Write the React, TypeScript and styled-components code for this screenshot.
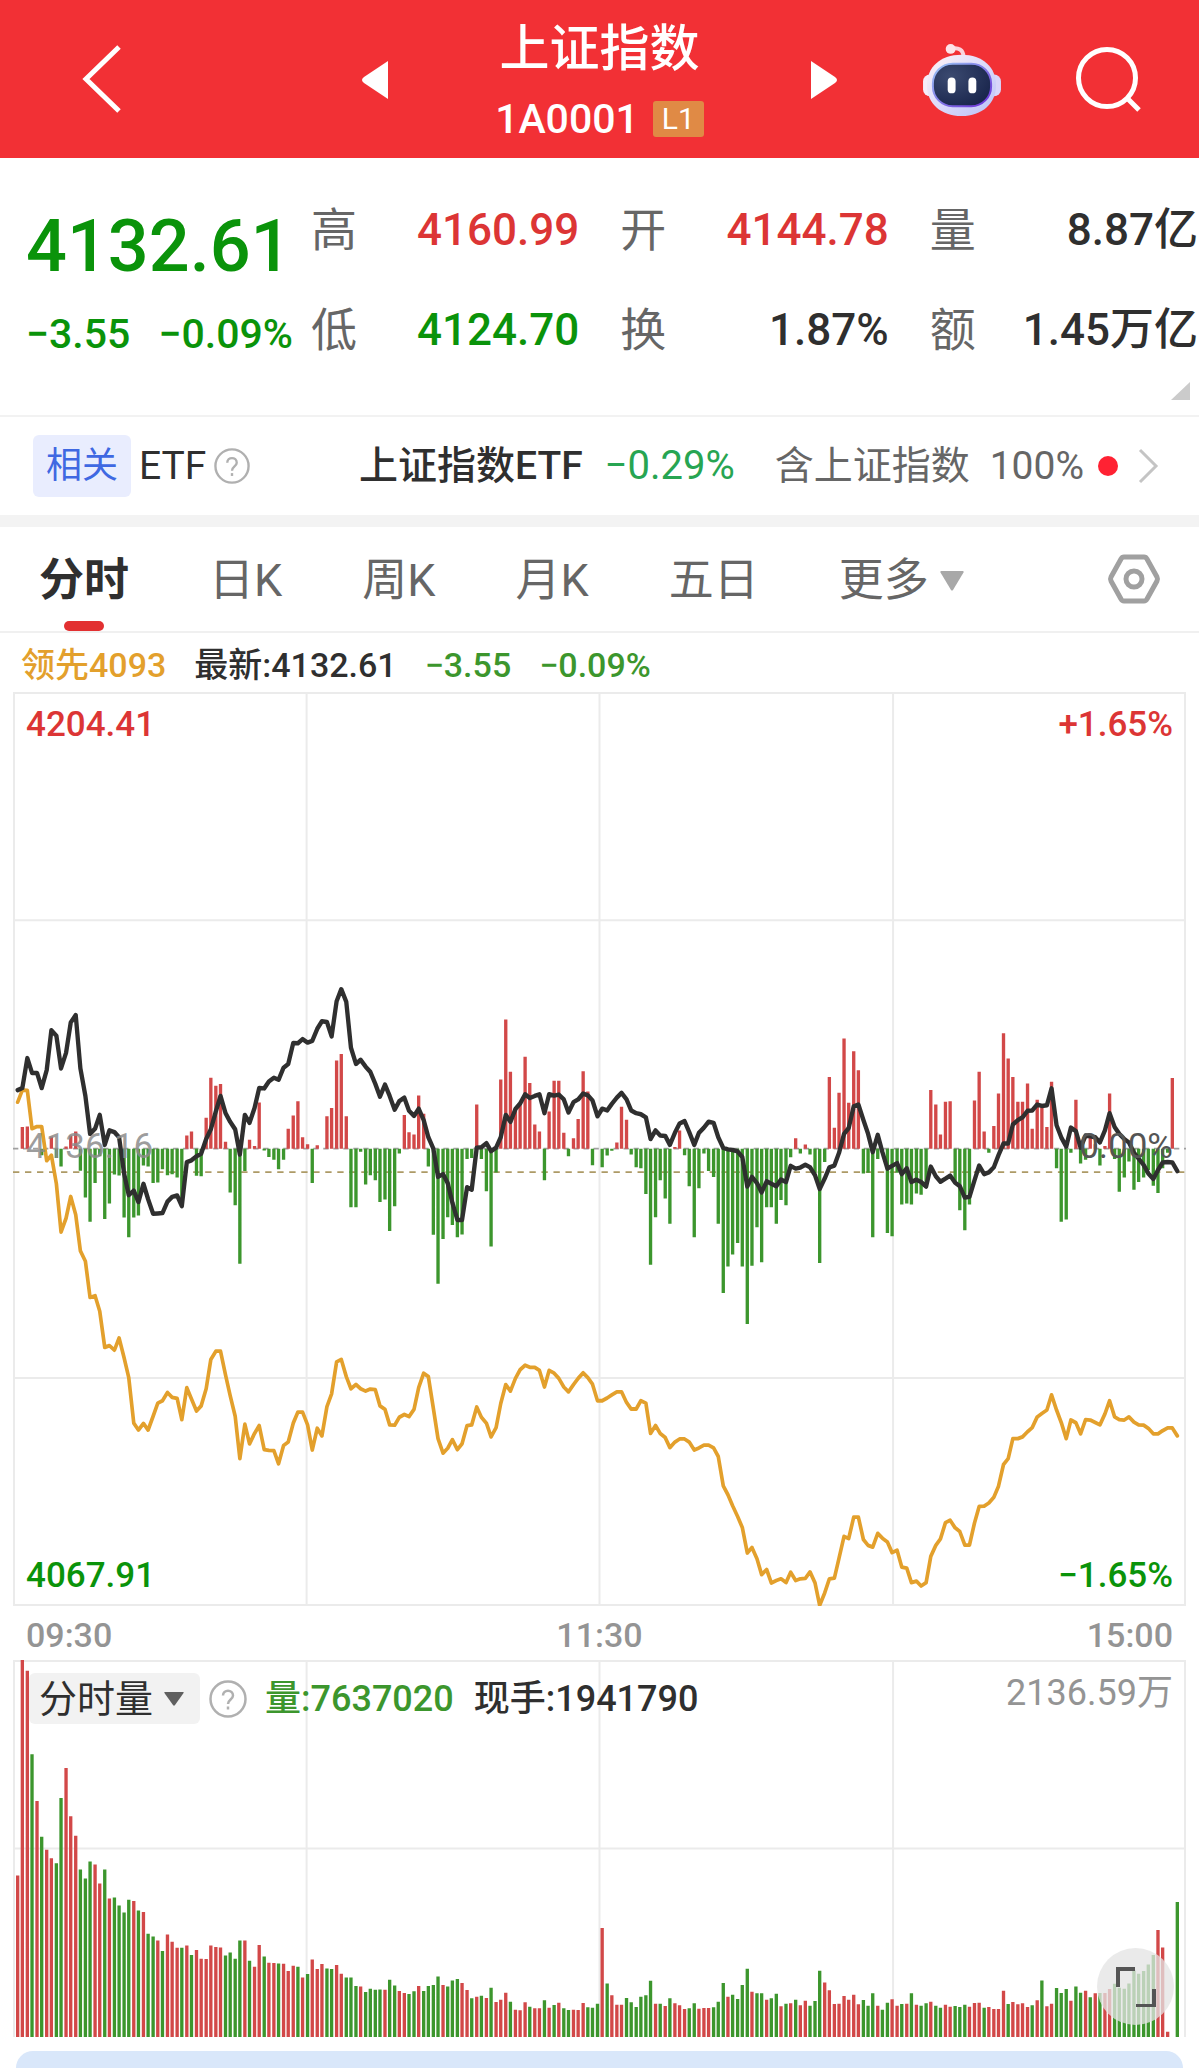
import React, { useState } from 'react';
import styled, { createGlobalStyle } from 'styled-components';

const color = {
  brand: '#f23035',
  rise: '#dc3535',
  fall: '#0a930a',
  chartRise: '#d24848',
  chartFall: '#3c962d',
  ink: '#2f2f2f',
  muted: '#666666',
  faint: '#949494',
  lead: '#e3a02c',
  grid: '#ebebeb',
};

/* One value per trading minute, in chart units measured downwards. */
const ZERO_LEVEL = 578;
const LAST_LEVEL = 646;

const priceLevels = [
  408, 402, 315, 358, 358, 402, 350, 234, 250, 345, 300, 212, 190, 345, 425, 535, 520, 480, 567, 525,
  530, 545, 650, 713, 700, 733, 680, 725, 767, 766, 765, 732, 718, 714, 745, 617, 612, 600, 593, 550,
  522, 470, 425, 475, 500, 522, 595, 480, 503, 460, 402, 403, 383, 372, 378, 343, 332, 271, 272, 260,
  270, 265, 230, 208, 210, 252, 150, 115, 152, 285, 332, 320, 340, 355, 390, 427, 392, 425, 465, 440,
  430, 468, 483, 462, 495, 545, 578, 660, 652, 678, 735, 785, 785, 690, 697, 575, 574, 562, 585, 575,
  545, 480, 500, 463, 447, 420, 431, 425, 420, 475, 420, 424, 421, 435, 473, 443, 435, 418, 423, 438,
  484, 462, 467, 448, 430, 416, 435, 467, 475, 478, 487, 550, 525, 540, 541, 567, 532, 505, 498, 530,
  567, 532, 517, 500, 503, 545, 576, 580, 582, 586, 602, 688, 660, 678, 705, 673, 680, 687, 668, 675,
  628, 636, 633, 625, 632, 655, 695, 665, 632, 627, 590, 535, 518, 455, 450, 495, 535, 588, 538, 588,
  636, 628, 620, 652, 635, 675, 668, 675, 688, 630, 658, 674, 665, 656, 677, 687, 720, 718, 670, 627,
  652, 647, 632, 597, 563, 563, 508, 495, 487, 468, 467, 450, 454, 452, 403, 510, 545, 572, 517, 527,
  575, 540, 542, 545, 560, 525, 475, 515, 535, 550, 560, 590, 607, 625, 650, 666, 640, 618, 617, 618,
  643,
];

const leadLevels = [
  443, 408, 409, 520, 514, 514, 613, 597, 680, 820, 780, 717, 770, 875, 905, 1010, 1005, 1050, 1155, 1150,
  1163, 1128, 1185, 1243, 1375, 1395, 1376, 1395, 1355, 1317, 1310, 1286, 1300, 1303, 1365, 1272, 1305, 1340, 1325, 1275,
  1190, 1166, 1166, 1235, 1295, 1355, 1478, 1378, 1435, 1405, 1382, 1452, 1454, 1455, 1493, 1440, 1430, 1375, 1343, 1343,
  1380, 1453, 1390, 1412, 1327, 1290, 1197, 1190, 1240, 1275, 1263, 1275, 1282, 1276, 1278, 1325, 1335, 1380, 1381, 1358,
  1350, 1356, 1335, 1272, 1230, 1240, 1332, 1420, 1462, 1448, 1423, 1452, 1435, 1382, 1380, 1328, 1358, 1375, 1415, 1388,
  1318, 1263, 1282, 1245, 1220, 1207, 1213, 1213, 1222, 1270, 1222, 1230, 1245, 1270, 1284, 1263, 1245, 1229, 1243, 1262,
  1310, 1310, 1302, 1293, 1284, 1284, 1315, 1334, 1334, 1310, 1317, 1405, 1382, 1405, 1417, 1446, 1430, 1421, 1421, 1430,
  1453, 1447, 1439, 1439, 1447, 1472, 1557, 1583, 1615, 1646, 1678, 1752, 1736, 1769, 1815, 1800, 1839, 1832, 1827, 1838,
  1808, 1832, 1827, 1826, 1807, 1839, 1904, 1868, 1827, 1825, 1767, 1704, 1710, 1648, 1648, 1713, 1730, 1735, 1695, 1709,
  1720, 1751, 1744, 1793, 1796, 1838, 1834, 1848, 1838, 1762, 1730, 1711, 1664, 1657, 1679, 1690, 1729, 1729, 1665, 1617,
  1616, 1607, 1590, 1558, 1495, 1478, 1420, 1420, 1415, 1400, 1388, 1357, 1347, 1337, 1293, 1337, 1373, 1420, 1366, 1374,
  1406, 1365, 1366, 1373, 1380, 1348, 1310, 1357, 1365, 1366, 1357, 1372, 1380, 1381, 1390, 1406, 1406, 1397, 1389, 1389,
  1412,
];

/* Bars grow from the zero level: above it they rise, below it they fall. */
const momentumLevels = [
  578, 515, 514, 578, 578, 597, 578, 543, 605, 630, 572, 540, 528, 642, 720, 790, 678, 600, 782, 737,
  653, 656, 778, 835, 778, 772, 627, 630, 678, 676, 638, 655, 652, 662, 735, 540, 528, 657, 658, 488,
  372, 395, 390, 558, 705, 742, 912, 643, 552, 570, 444, 583, 602, 610, 638, 610, 520, 482, 440, 545,
  565, 678, 568, 578, 484, 460, 322, 303, 484, 748, 748, 587, 682, 655, 670, 733, 726, 817, 745, 592,
  480, 530, 537, 424, 477, 630, 828, 970, 840, 777, 800, 835, 827, 608, 605, 450, 608, 702, 862, 647,
  377, 203, 355, 460, 450, 311, 387, 508, 528, 670, 470, 381, 381, 532, 600, 548, 492, 353, 412, 626,
  578, 632, 598, 584, 560, 456, 494, 595, 632, 635, 710, 915, 777, 670, 723, 796, 573, 525, 597, 687,
  835, 693, 592, 643, 660, 796, 997, 920, 885, 852, 920, 1087, 918, 806, 908, 748, 748, 796, 727, 742,
  603, 548, 592, 566, 595, 650, 910, 617, 370, 517, 416, 258, 445, 295, 350, 650, 648, 835, 608, 590,
  823, 832, 648, 740, 737, 740, 708, 712, 690, 408, 450, 537, 442, 440, 677, 757, 815, 740, 438, 355,
  528, 590, 512, 418, 243, 316, 370, 442, 442, 389, 520, 436, 448, 515, 384, 635, 790, 784, 590, 436,
  621, 610, 545, 565, 627, 570, 418, 608, 703, 662, 615, 697, 675, 662, 640, 686, 707, 635, 590, 373,
  578,
];

/* Bar tops in the volume pane; a negative entry marks a falling minute. */
const VOLUME_BASE = 1432;
const volumeLevels = [
  947, 298, 332, -583, 723, -831, 870, 895, -910, -714, 624, 769, 828, -929, -956, -905, 914, 971, -929, 1016,
  -1013, -1037, -1058, -1020, 1024, -1052, 1057, -1122, -1130, 1142, -1174, 1124, 1146, 1164, -1164, 1157, -1186, 1171, 1197, 1198,
  1157, 1162, 1163, -1187, -1178, -1197, -1142, 1142, -1203, 1221, 1156, -1190, 1209, 1210, -1211, 1212, 1234, 1218, -1221, 1253,
  -1243, 1199, 1228, 1213, -1226, -1228, 1216, 1242, -1253, -1253, -1279, 1280, -1297, -1287, -1290, -1289, 1290, -1260, -1277, 1294,
  1300, -1303, -1295, 1279, -1294, -1279, -1276, -1250, 1276, -1280, -1262, -1258, 1270, 1291, -1316, 1311, -1308, 1315, -1284, 1327,
  1320, 1299, -1326, 1350, 1352, 1328, -1341, 1346, 1346, -1322, 1344, -1336, 1329, -1346, -1351, 1350, 1351, 1330, -1343, -1344,
  -1332, 1105, -1271, 1307, 1335, 1335, -1315, -1328, -1342, -1311, -1307, -1263, 1332, -1332, 1339, -1316, 1331, 1337, 1348, -1346,
  -1331, 1347, 1345, 1345, -1343, -1326, -1270, 1311, -1305, -1318, -1276, -1227, 1296, -1301, -1301, 1320, -1316, -1302, 1340, -1332,
  1331, -1320, 1337, 1323, -1338, -1324, -1233, 1268, 1292, 1333, 1332, 1309, 1320, 1305, 1334, -1321, -1338, -1301, 1338, -1350,
  -1329, 1319, 1338, -1333, 1332, -1301, 1335, -1338, -1331, 1326, -1338, -1344, 1335, 1341, -1339, -1342, -1335, 1341, 1330, 1329,
  -1344, 1342, 1348, 1348, 1293, -1333, 1327, 1334, 1331, 1342, -1337, 1322, -1262, 1340, 1332, -1285, -1300, -1288, 1323, -1280,
  -1299, 1293, -1313, 1301, -1300, 1300, 1288, -1272, -1284, -1287, -1271, -1232, -1242, -1234, -1214, -1186, 1111, 1163, 1416, 1432,
  -1027,
];

const CHART_WIDTH = 3516;
const minuteX = (minute: number) => Math.round(14 + minute * 14.483);
const linePath = (levels: number[]) => levels.map((y, i) => `${i ? 'L' : 'M'}${minuteX(i)} ${y}`).join('');
const barPath = (levels: number[], base: number, keep: (level: number) => boolean) =>
  levels.map((y, i) => (keep(y) ? `M${minuteX(i)} ${base}V${Math.abs(y)}` : '')).join('');

const GlobalStyle = createGlobalStyle`
  *, *::before, *::after { box-sizing: border-box; }
  body {
    margin: 0;
    background: #fff;
    color: ${color.ink};
    font-family: Roboto, 'Noto Sans CJK SC', sans-serif;
  }
  button, select { font: inherit; color: inherit; border: 0; background: none; padding: 0; margin: 0; }
  a { color: inherit; text-decoration: none; }
  svg { display: block; }
  h1, p, dl, dd, dt { margin: 0; font-weight: inherit; }
`;

const Page = styled.div`
  display: flex;
  flex-direction: column;
  overflow: hidden;
`;

/* ---------- header ---------- */

const Header = styled.header`
  display: grid;
  grid-template-columns: 1fr 476px 1fr;
  align-items: center;
  height: 158px;
  padding-top: 2px;
  background: ${color.brand};
  color: #fff;
`;

const HeaderSide = styled.div<{ $end?: boolean }>`
  display: flex;
  align-items: center;
  gap: 75px;
  justify-content: ${p => (p.$end ? 'flex-end' : 'flex-start')};
  padding: ${p => (p.$end ? '0 57px 0 0' : '0 0 0 82px')};
`;

const Switcher = styled.div`
  display: flex;
  align-items: center;
  justify-content: space-between;
`;

const TitleBlock = styled.div`
  display: flex;
  flex-direction: column;
  align-items: center;
  gap: 14px;
`;

const Title = styled.h1`
  font-size: 50px;
  line-height: 64px;
  font-weight: 500;
`;

const CodeLine = styled.p`
  display: flex;
  align-items: center;
  gap: 14px;
  font-size: 41px;
  line-height: 48px;
  font-weight: 500;
`;

const LevelBadge = styled.span`
  padding: 0 9px;
  border-radius: 3px;
  background: #e08a45;
  font-size: 30px;
  line-height: 36px;
  font-weight: 400;
`;

/* ---------- quote ---------- */

const Quote = styled.section`
  display: flex;
  height: 259px;
  border-bottom: 2px solid #f2f2f2;
  padding: 36px 1px 0 26px;
  position: relative;
`;

const QuoteMain = styled.div`
  width: 285px;
  flex: none;
  white-space: nowrap;
  color: ${color.fall};
`;

const LastPrice = styled.p`
  padding-top: 11px;
  font-size: 72px;
  line-height: 84px;
  font-weight: 500;
`;

const Change = styled.p`
  display: flex;
  gap: 28px;
  padding-top: 21px;
  font-size: 41px;
  line-height: 48px;
  font-weight: 500;
`;

const Stats = styled.dl`
  flex: 1;
  display: grid;
  grid-template-columns: repeat(3, 1fr);
  grid-auto-rows: 72px;
  column-gap: 41px;
  row-gap: 28px;
`;

const Stat = styled.div`
  display: flex;
  align-items: center;
  justify-content: space-between;
  white-space: nowrap;
`;

const StatLabel = styled.dt`
  font-size: 46px;
  line-height: 60px;
  color: ${color.muted};
`;

const StatValue = styled.dd<{ $tone?: 'rise' | 'fall' }>`
  font-size: 44px;
  line-height: 60px;
  font-weight: 500;
  color: ${p => (p.$tone ? color[p.$tone] : color.ink)};
`;

const Corner = styled.span`
  position: absolute;
  right: 9px;
  bottom: 15px;
  width: 19px;
  height: 18px;
  background: #cbcbcb;
  clip-path: polygon(100% 0, 100% 100%, 0 100%);
`;

/* ---------- related fund ---------- */

const Related = styled.section`
  display: flex;
  align-items: center;
  justify-content: space-between;
  height: 110px;
  padding: 0 40px 0 33px;
  border-bottom: 12px solid #f3f3f3;
  font-size: 39px;
  line-height: 48px;
  white-space: nowrap;
`;

const RelatedGroup = styled.div`
  display: flex;
  align-items: center;
  gap: 8px;
`;

const RelatedTag = styled.span`
  padding: 0 13px;
  border-radius: 6px;
  background: #e9edfe;
  color: #3f68e2;
  font-size: 36px;
  line-height: 62px;
`;

const FundLink = styled.a`
  display: flex;
  align-items: center;
`;

const FundName = styled.span`
  font-weight: 500;
`;

const FundChange = styled.span`
  margin: 0 40px 0 22px;
  font-size: 40px;
  color: #27a552;
`;

const FundShare = styled.span`
  margin-right: 14px;
  color: ${color.muted};
`;

const Dot = styled.i`
  width: 20px;
  height: 20px;
  margin-right: 20px;
  border-radius: 50%;
  background: #ff2233;
`;

/* ---------- period tabs ---------- */

const PeriodBar = styled.nav`
  display: flex;
  align-items: center;
  justify-content: space-between;
  height: 106px;
  padding: 0 38px 0 39px;
  border-bottom: 2px solid #f0f0f0;
`;

const Periods = styled.div`
  display: flex;
  align-items: center;
  gap: 80px;
  height: 100%;
`;

const Period = styled.button<{ $active: boolean }>`
  position: relative;
  height: 100%;
  padding-top: 4px;
  font-size: 45px;
  line-height: 60px;
  font-weight: ${p => (p.$active ? 700 : 400)};
  color: ${p => (p.$active ? color.ink : color.muted)};

  &::after {
    content: '';
    display: ${p => (p.$active ? 'block' : 'none')};
    position: absolute;
    left: 50%;
    bottom: 0;
    width: 40px;
    height: 10px;
    margin-left: -20px;
    border-radius: 5px;
    background: #e23031;
  }
`;

const SelectWrap = styled.label<{ $boxed?: boolean }>`
  display: flex;
  align-items: center;
  gap: 10px;
  height: ${p => (p.$boxed ? '51px' : '100%')};
  padding: ${p => (p.$boxed ? '0 16px 0 10px' : '4px 0 0')};
  border-radius: 6px;
  background: ${p => (p.$boxed ? '#f2f2f2' : 'transparent')};
  color: ${p => (p.$boxed ? color.ink : color.muted)};
  font-size: ${p => (p.$boxed ? '38px' : '45px')};
  line-height: ${p => (p.$boxed ? '50px' : '60px')};
  font-weight: 400;
`;

const PlainSelect = styled.select`
  appearance: none;
  outline: none;
`;

/* ---------- charts ---------- */

const ChartArea = styled.main`
  padding: 0 13px;
`;

const Legend = styled.p`
  display: flex;
  align-items: center;
  gap: 28px;
  height: 59px;
  padding: 5px 0 0 8px;
  font-size: 34px;
  line-height: 48px;
  font-weight: 500;
`;

const Tone = styled.span<{ $color: string }>`
  color: ${p => p.$color};
`;

const Pane = styled.div<{ $height: number }>`
  position: relative;
  height: ${p => p.$height}px;

  > svg { width: 100%; height: 100%; }
`;

const ScaleLabel = styled.span<{ $side: 'left' | 'right'; $at: 'top' | 'middle' | 'bottom'; $color: string }>`
  position: absolute;
  ${p => p.$side}: 13px;
  ${p => (p.$at === 'bottom' ? 'bottom: 8px;' : p.$at === 'middle' ? 'top: calc(50% - 24px);' : 'top: 11px;')}
  font-size: 35px;
  line-height: 44px;
  font-weight: ${p => (p.$at === 'middle' ? 400 : 500)};
  color: ${p => p.$color};
`;

const TimeAxis = styled.div`
  display: grid;
  grid-template-columns: 1fr auto 1fr;
  align-items: center;
  height: 54px;
  padding: 3px 13px 0;
  font-size: 34px;
  line-height: 44px;
  font-weight: 500;
  color: ${color.faint};

  > :last-child { text-align: right; }
`;

const VolumeHead = styled.div`
  position: absolute;
  inset: 13px 13px auto 16px;
  display: flex;
  align-items: center;
  gap: 9px;
  font-size: 36px;
  line-height: 50px;
  font-weight: 500;
  white-space: nowrap;
`;

const VolumeFigures = styled.span`
  display: flex;
  gap: 20px;
  padding-left: 9px;
`;

const VolumePeak = styled.span`
  margin: -12px 0 0 auto;
  font-weight: 400;
  color: ${color.faint};
`;

const ExpandButton = styled.button`
  position: absolute;
  right: 12px;
  bottom: 12px;
  display: grid;
  place-items: center;
  width: 77px;
  height: 77px;
  border-radius: 50%;
  background: rgba(228, 228, 228, 0.76);
`;

const Banner = styled.aside`
  height: 17px;
  margin: 14px 16px 0;
  border-radius: 18px 18px 0 0;
  background: #d9e7fa;
`;

const IconButton = styled.button`
  display: flex;
  cursor: pointer;
`;

const BackIcon = () => (
  <svg width="40" height="70" viewBox="0 0 40 70" fill="none" stroke="#fff" strokeWidth="5">
    <path d="M37 2 4 34l33 32" />
  </svg>
);

const TriangleIcon = ({ right }: { right?: boolean }) => (
  <svg width="26" height="38" viewBox="0 0 26 38" fill="#fff">
    <path d={right ? 'M0 0v38l24-16q4-3 0-6Z' : 'M26 0v38L2 22q-4-3 0-6Z'} />
  </svg>
);

const RobotIcon = () => (
  <svg width="78" height="73" viewBox="0 0 79 74">
    <defs>
      <linearGradient id="shell" x1="0" y1="0" x2="1" y2="1">
        <stop offset="0" stopColor="#fff4f6" />
        <stop offset="0.55" stopColor="#d9d8fb" />
        <stop offset="1" stopColor="#b9c0f5" />
      </linearGradient>
      <linearGradient id="rim" x1="0" y1="0" x2="1" y2="1">
        <stop offset="0" stopColor="#9cc9f7" />
        <stop offset="1" stopColor="#6a2bd6" />
      </linearGradient>
      <radialGradient id="face" cx="0.3" cy="0.3" r="0.8">
        <stop offset="0" stopColor="#3b4a70" />
        <stop offset="1" stopColor="#19254c" />
      </radialGradient>
    </defs>
    <path d="M28 5c8-2 13 1 13 8" fill="none" stroke="#fbd3dc" strokeWidth="4" />
    <circle cx="28" cy="5" r="5" fill="#fde3e8" />
    <rect x="0" y="31" width="14" height="22" rx="7" fill="#f6ecfa" />
    <rect x="65" y="31" width="14" height="22" rx="7" fill="#d9d5fa" />
    <path d="M39 11c22 0 35 13 35 31S60 73 39 73 4 60 4 42s13-31 35-31Z" fill="url(#shell)" />
    <rect x="10" y="20" width="59" height="43" rx="20" fill="url(#face)" stroke="url(#rim)" strokeWidth="2" />
    <rect x="25" y="34" width="8" height="16" rx="4" fill="#fff" />
    <rect x="46" y="34" width="8" height="16" rx="4" fill="#fff" />
  </svg>
);

const SearchIcon = () => (
  <svg width="66" height="66" viewBox="0 0 66 66" fill="none" stroke="#fff" strokeWidth="5">
    <circle cx="31" cy="31" r="28.5" />
    <path d="m52 52 11 11" />
  </svg>
);

const HelpIcon = ({ size }: { size: number }) => (
  <svg width={size} height={size} viewBox="0 0 38 38" fill="none" stroke="#b0b0b0" strokeWidth="2.5">
    <circle cx="19" cy="19" r="17.5" />
    <path d="M14 15.500c0-6.500 10-6.500 10 0 0 4-5 4-5 8.500" />
    <path d="M19 26.500v3" />
  </svg>
);

const ChevronIcon = () => (
  <svg width="21" height="36" viewBox="0 0 21 36" fill="none" stroke="#c4c4c4" strokeWidth="3">
    <path d="m2 2 16 16L2 34" />
  </svg>
);

const CaretIcon = ({ width, height, fill }: { width: number; height: number; fill: string }) => (
  <svg width={width} height={height} viewBox="0 0 24 20" fill={fill} preserveAspectRatio="none">
    <path d="M1 0h22q1 0 .5 1.500L13 19q-1 1-2 0L.5 1.500Q0 0 1 0Z" />
  </svg>
);

const SettingsIcon = () => (
  <svg width="54" height="50" viewBox="0 0 54 50" fill="none" stroke="#a0a0a0" strokeWidth="5" strokeLinejoin="round">
    <path d="M17 3h20q2 0 3 2l10 18q1 2 0 4L40 45q-1 2-3 2H17q-2 0-3-2L4 27q-1-2 0-4L14 5q1-2 3-2Z" />
    <circle cx="27" cy="25" r="8" />
  </svg>
);

const ExpandIcon = () => (
  <svg width="40" height="40" viewBox="0 0 40 40" fill="none" stroke="#555" strokeWidth="4">
    <path d="M2 20V2h17M38 22v17H20" />
  </svg>
);

const PriceChart = () => (
  <svg viewBox={`0 -748 ${CHART_WIDTH} 2654`} preserveAspectRatio="none" fill="none" role="img" aria-label="分时走势">
    <g stroke={color.grid} strokeWidth="6">
      <path d="M3-745H3513V1903H3Z" />
      <path d="M0-85H3516M0 1244H3516M880-748V1906M1758-748V1906M2638-748V1906" />
    </g>
    <path d={`M0 ${ZERO_LEVEL}H3516`} stroke="#a0a0a0" strokeWidth="5" strokeDasharray="16 14" />
    <path d={`M0 ${LAST_LEVEL}H3516`} stroke="#ad9a66" strokeWidth="5" strokeDasharray="19 17" />
    <g strokeWidth="10">
      <path d={barPath(momentumLevels, ZERO_LEVEL, y => y < ZERO_LEVEL)} stroke={color.chartRise} />
      <path d={barPath(momentumLevels, ZERO_LEVEL, y => y > ZERO_LEVEL)} stroke={color.chartFall} />
    </g>
    <g strokeLinejoin="round" strokeLinecap="round">
      <path d={linePath(leadLevels)} stroke={color.lead} strokeWidth="11" />
      <path d={linePath(priceLevels)} stroke={color.ink} strokeWidth="13" />
    </g>
  </svg>
);

const VolumeChart = () => (
  <svg viewBox={`0 300 ${CHART_WIDTH} 1132`} preserveAspectRatio="none" fill="none" role="img" aria-label="分时量">
    <path
      d="M3 1432V303H3513V1432M0 866H3516M880 300V1432M1758 300V1432M2638 300V1432"
      stroke={color.grid}
      strokeWidth="6"
    />
    <g strokeWidth="10">
      <path d={barPath(volumeLevels, VOLUME_BASE, y => y > 0)} stroke={color.chartRise} />
      <path d={barPath(volumeLevels, VOLUME_BASE, y => y < 0)} stroke={color.chartFall} />
    </g>
  </svg>
);

const stats: { label: string; value: string; tone?: 'rise' | 'fall' }[] = [
  { label: '高', value: '4160.99', tone: 'rise' },
  { label: '开', value: '4144.78', tone: 'rise' },
  { label: '量', value: '8.87亿' },
  { label: '低', value: '4124.70', tone: 'fall' },
  { label: '换', value: '1.87%' },
  { label: '额', value: '1.45万亿' },
];

const periods = ['分时', '日K', '周K', '月K', '五日'];

export default function App() {
  const [period, setPeriod] = useState(periods[0]);

  return (
    <Page>
      <GlobalStyle />
      <Header>
        <HeaderSide>
          <IconButton aria-label="返回"><BackIcon /></IconButton>
        </HeaderSide>
        <Switcher>
          <IconButton aria-label="上一个"><TriangleIcon /></IconButton>
          <TitleBlock>
            <Title>上证指数</Title>
            <CodeLine>1A0001<LevelBadge>L1</LevelBadge></CodeLine>
          </TitleBlock>
          <IconButton aria-label="下一个"><TriangleIcon right /></IconButton>
        </Switcher>
        <HeaderSide $end>
          <IconButton aria-label="智能助手"><RobotIcon /></IconButton>
          <IconButton aria-label="搜索"><SearchIcon /></IconButton>
        </HeaderSide>
      </Header>

      <Quote>
        <QuoteMain>
          <LastPrice>4132.61</LastPrice>
          <Change><span>−3.55</span><span>−0.09%</span></Change>
        </QuoteMain>
        <Stats>
          {stats.map(s => (
            <Stat key={s.label}>
              <StatLabel>{s.label}</StatLabel>
              <StatValue $tone={s.tone}>{s.value}</StatValue>
            </Stat>
          ))}
        </Stats>
        <Corner />
      </Quote>

      <Related>
        <RelatedGroup>
          <RelatedTag>相关</RelatedTag>
          <span>ETF</span>
          <IconButton aria-label="ETF说明"><HelpIcon size={36} /></IconButton>
        </RelatedGroup>
        <FundLink href="#etf">
          <FundName>上证指数ETF</FundName>
          <FundChange>−0.29%</FundChange>
          <FundShare>含上证指数&ensp;100%</FundShare>
          <Dot />
          <ChevronIcon />
        </FundLink>
      </Related>

      <PeriodBar>
        <Periods>
          {periods.map(name => (
            <Period key={name} $active={name === period} onClick={() => setPeriod(name)}>{name}</Period>
          ))}
          <SelectWrap>
            <PlainSelect aria-label="更多周期"><option>更多</option></PlainSelect>
            <CaretIcon width={24} height={20} fill="#a8a8a8" />
          </SelectWrap>
        </Periods>
        <IconButton aria-label="设置"><SettingsIcon /></IconButton>
      </PeriodBar>

      <ChartArea>
        <Legend>
          <Tone $color={color.lead}>领先4093</Tone>
          <span>最新:4132.61</span>
          <Tone $color={color.chartFall}>−3.55</Tone>
          <Tone $color={color.chartFall}>−0.09%</Tone>
        </Legend>
        <Pane $height={914}>
          <PriceChart />
          <ScaleLabel $side="left" $at="top" $color={color.rise}>4204.41</ScaleLabel>
          <ScaleLabel $side="right" $at="top" $color={color.rise}>+1.65%</ScaleLabel>
          <ScaleLabel $side="left" $at="middle" $color="rgba(140, 140, 140, 0.85)">4136.16</ScaleLabel>
          <ScaleLabel $side="right" $at="middle" $color="#555">0.00%</ScaleLabel>
          <ScaleLabel $side="left" $at="bottom" $color={color.fall}>4067.91</ScaleLabel>
          <ScaleLabel $side="right" $at="bottom" $color={color.fall}>−1.65%</ScaleLabel>
        </Pane>
        <TimeAxis><span>09:30</span><span>11:30</span><span>15:00</span></TimeAxis>
        <Pane $height={377}>
          <VolumeChart />
          <VolumeHead>
            <SelectWrap $boxed>
              <PlainSelect aria-label="副图指标"><option>分时量</option></PlainSelect>
              <CaretIcon width={20} height={14} fill="#606060" />
            </SelectWrap>
            <IconButton aria-label="指标说明"><HelpIcon size={38} /></IconButton>
            <VolumeFigures>
              <Tone $color={color.chartFall}>量:7637020</Tone>
              <span>现手:1941790</span>
            </VolumeFigures>
            <VolumePeak>2136.59万</VolumePeak>
          </VolumeHead>
          <ExpandButton aria-label="全屏"><ExpandIcon /></ExpandButton>
        </Pane>
      </ChartArea>
      <Banner />
    </Page>
  );
}
